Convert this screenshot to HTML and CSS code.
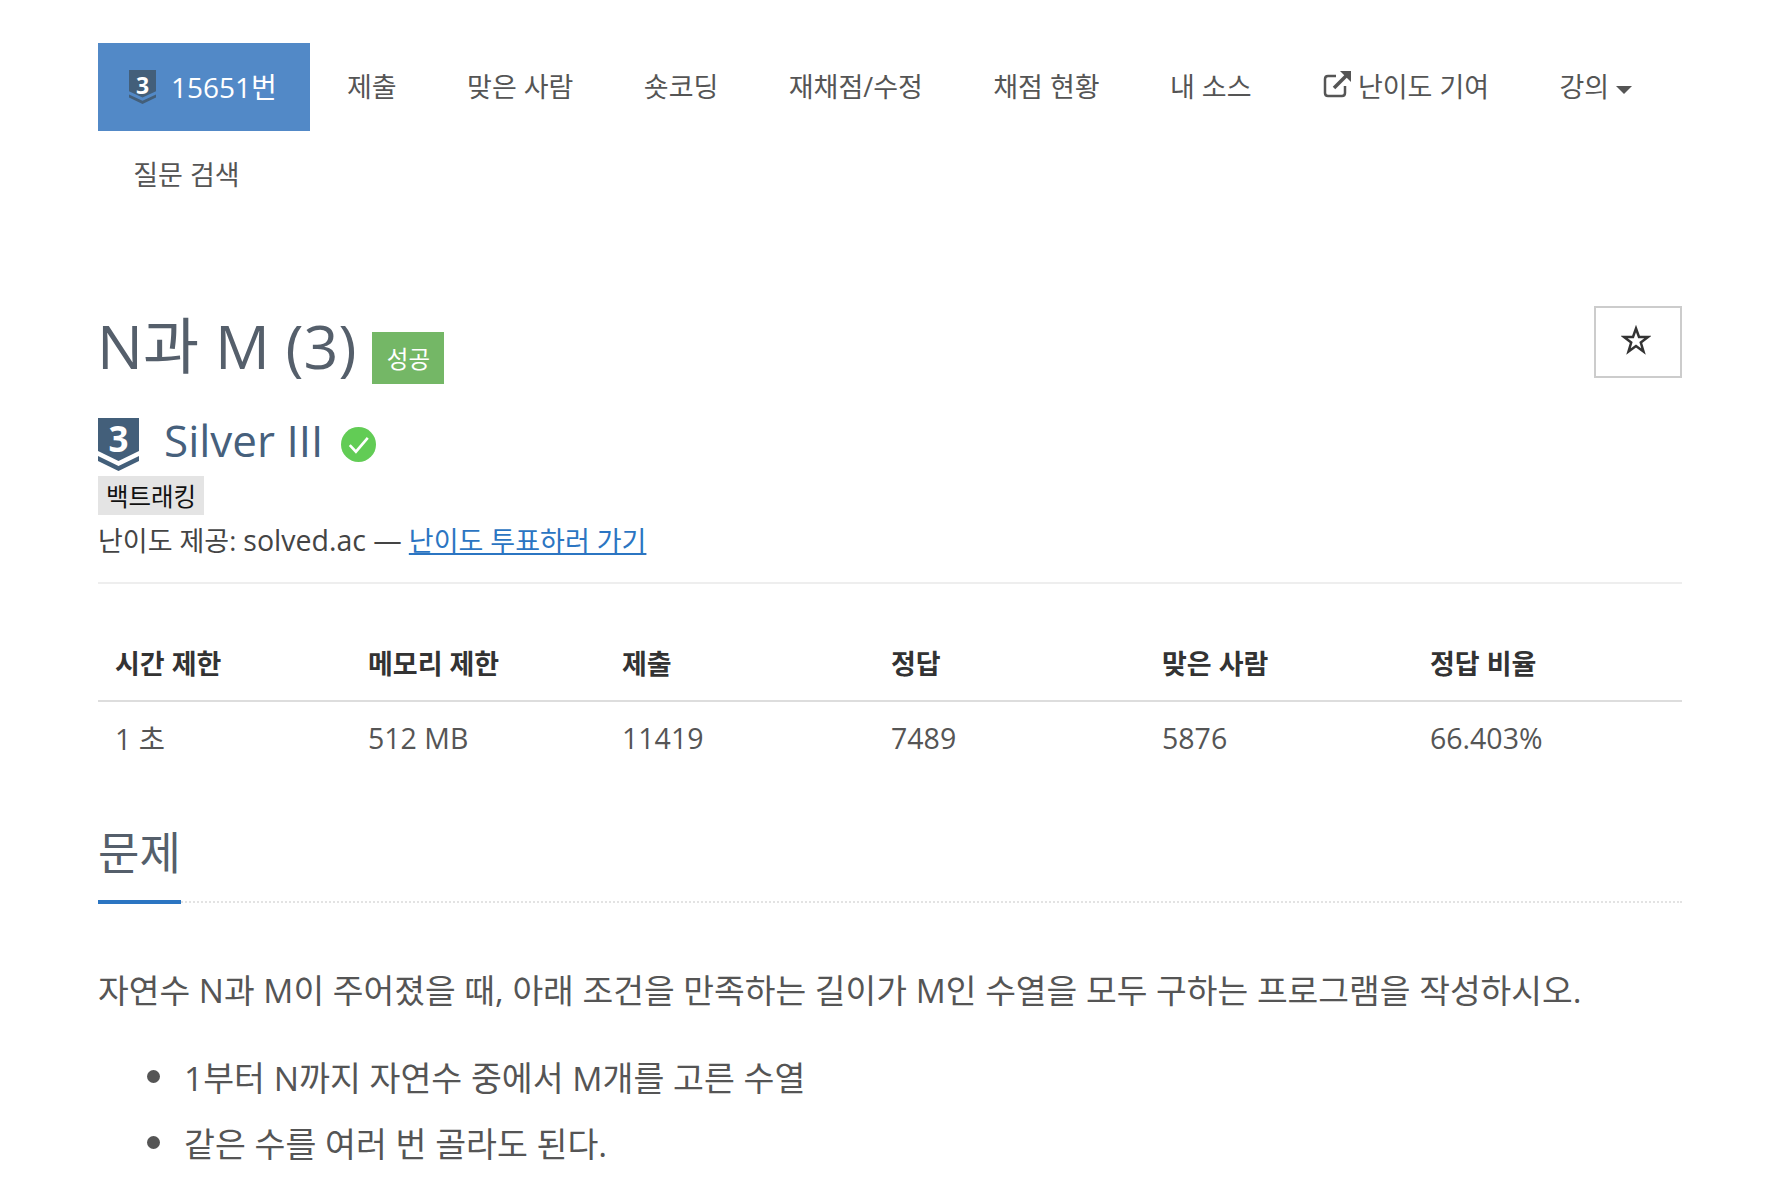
FILE: index.html
```html
<!DOCTYPE html>
<html lang="ko">
<head>
    <meta charset="UTF-8">
    <meta name="viewport" content="width=device-width, initial-scale=1.0">
    <title>N과 M (3)</title>
    <link rel="stylesheet" href="styles.css">
</head>
<body>
    <div class="container">
        <!-- Problem menu -->
        <ul class="problem-menu">
            <li class="active">
                <a href="#">
                    <span class="tier tier-small">
                        <svg viewBox="0 0 41 53" preserveAspectRatio="none">
                            <path d="M0 0H41V33L20.500 43L0 33Z" fill="#435f7a"/>
                            <path d="M0 38L20.500 48L41 38V43L20.500 53L0 43Z" fill="#435f7a"/>
                        </svg>
                        <span class="tier-digit">3</span>
                    </span>
                    15651번
                </a>
            </li>
            <li><a href="#">제출</a></li>
            <li><a href="#">맞은 사람</a></li>
            <li><a href="#">숏코딩</a></li>
            <li><a href="#">재채점/수정</a></li>
            <li><a href="#">채점 현황</a></li>
            <li><a href="#">내 소스</a></li>
            <li>
                <a href="#">
                    <svg class="ext-icon" viewBox="0 0 30 30">
                        <path d="M14 6H6Q3 6 3 9V23Q3 26 6 26H20Q23 26 23 23V16" fill="none" stroke="#555" stroke-width="2.500"/>
                        <path d="M12 18L24 6" fill="none" stroke="#555" stroke-width="3.500"/>
                        <path d="M18 1H29V12Z" fill="#555"/>
                    </svg>
                    난이도 기여
                </a>
            </li>
            <li><a href="#">강의<span class="caret"></span></a></li>
            <li><a href="#">질문 검색</a></li>
        </ul>

        <!-- Title -->
        <div class="title-row">
            <h1>N과 M (3)</h1>
            <span class="label-success">성공</span>
            <button class="star-btn">
                <svg viewBox="0 0 30 30" width="30" height="30">
                    <path d="M15 3.500L18 12H27L19.800 17.500L22.500 26.500L15 21L7.500 26.500L10.200 17.500L3 12H12Z" fill="none" stroke="#333" stroke-width="2.500"/>
                </svg>
            </button>
        </div>

        <div class="tier-row">
            <span class="tier tier-big">
                <svg viewBox="0 0 41 53" preserveAspectRatio="none">
                    <path d="M0 0H41V33L20.500 43L0 33Z" fill="#435f7a"/>
                    <path d="M0 38L20.500 48L41 38V43L20.500 53L0 43Z" fill="#435f7a"/>
                </svg>
                <span class="tier-digit">3</span>
            </span>
            <span class="tier-name">Silver III</span>
            <svg class="check-icon" viewBox="0 0 34 34">
                <circle cx="17" cy="17" r="17" fill="#62cc55"/>
                <path d="M8.500 17.500L14.500 24L26 10.500" fill="none" stroke="#fff" stroke-width="2.500"/>
            </svg>
        </div>
        <div class="tag-row"><span class="tag">백트래킹</span></div>
        <p class="credit">난이도 제공: <span class="latin">solved.ac —</span> <a href="#">난이도 투표하러 가기</a></p>

        <hr>

        <!-- Limits -->
        <table class="info-table">
            <thead>
                <tr>
                    <th>시간 제한</th>
                    <th>메모리 제한</th>
                    <th>제출</th>
                    <th>정답</th>
                    <th>맞은 사람</th>
                    <th>정답 비율</th>
                </tr>
            </thead>
            <tbody>
                <tr>
                    <td>1 초</td>
                    <td>512 MB</td>
                    <td>11419</td>
                    <td>7489</td>
                    <td>5876</td>
                    <td>66.403%</td>
                </tr>
            </tbody>
        </table>

        <!-- Description -->
        <div class="headline">
            <h2>문제</h2>
        </div>
        <p class="description">자연수 N과 M이 주어졌을 때, 아래 조건을 만족하는 길이가 M인 수열을 모두 구하는 프로그램을 작성하시오.</p>
        <ul class="conditions">
            <li>1부터 N까지 자연수 중에서 M개를 고른 수열</li>
            <li>같은 수를 여러 번 골라도 된다.</li>
        </ul>
    </div>
</body>
</html>
```

FILE: styles.css
```css
html, body {
    height: 100%;
    overflow: hidden;
}

body {
    margin: 0;
    background-color: #fff;
    color: #555;
    font-family: "Open Sans", "Noto Sans CJK KR", sans-serif;
    font-size: 27px;
}

a {
    color: inherit;
    text-decoration: none;
}

.container {
    padding: 43px 106px 0 98px;
}

.problem-menu {
    display: flex;
    flex-wrap: wrap;
    list-style: none;
    margin: 0;
    padding: 0;
}

.problem-menu a {
    display: flex;
    align-items: center;
    height: 88px;
    padding: 0 35.200px 4px;
    box-sizing: border-box;
}

.problem-menu .active {
    margin-right: 2px;
}

.problem-menu .active a {
    padding: 0 33px 3px 31px;
    background-color: #5289c7;
    color: #fff;
    font-size: 28px;
}

.tier {
    position: relative;
    display: block;
    flex-shrink: 0;
}

.tier svg {
    display: block;
    width: 100%;
    height: 100%;
}

/* digit sits on top of the shield */
.tier-digit {
    position: absolute;
    left: 0;
    right: 0;
    color: #fff;
    font-weight: 700;
    line-height: 1;
    text-align: center;
}

.tier-small {
    width: 27px;
    height: 34px;
    margin-top: 3px;
    margin-right: 15px;
}

.tier-small .tier-digit {
    top: 11%;
    font-size: 23px;
}

.tier-big {
    width: 41px;
    height: 53px;
}

.tier-big .tier-digit {
    top: 7%;
    font-size: 35px;
}

.ext-icon {
    width: 30px;
    height: 30px;
    margin-right: 6px;
}

.caret {
    display: inline-block;
    margin-left: 7px;
    margin-top: 10px;
    border-top: 8px solid #555;
    border-left: 8px solid transparent;
    border-right: 8px solid transparent;
}

.title-row {
    display: flex;
    align-items: center;
    height: 72px;
    margin-top: 87px;
}

h1 {
    margin: 0 0 0 -1px;
    color: #555f6b;
    font-size: 61px;
    font-weight: 400;
}

.label-success {
    display: flex;
    align-items: center;
    justify-content: center;
    width: 72px;
    height: 52px;
    margin-left: 16px;
    margin-top: 32px;
    background-color: #74b766;
    color: #fff;
    font-size: 23.500px;
}

.star-btn {
    display: flex;
    align-items: center;
    justify-content: center;
    width: 88px;
    height: 72px;
    margin-left: auto;
    padding: 0 4px 4px 0;
    background-color: #fff;
    border: 2px solid #ccc;
}

.tier-row {
    display: flex;
    align-items: center;
    height: 60px;
    margin-top: 36px;
}

.tier-name {
    margin-left: 25px;
    padding-bottom: 8px;
    color: #46607c;
    font-size: 44px;
    line-height: 52px;
}

.check-icon {
    width: 35px;
    height: 35px;
    margin-left: 18px;
}

.tag-row {
    display: flex;
    margin-top: 2px;
}

.tag {
    padding: 2px 8px;
    background-color: #e4e4e4;
    color: #111;
    font-size: 24.500px;
}

.credit {
    margin: 5px 0 0;
    color: #444;
}

.credit .latin {
    font-size: 28.500px;
}

.credit a {
    color: #2b75c2;
    text-decoration: underline;
}

hr {
    margin: 23px 0 0;
    border: 0;
    border-top: 2px solid #eee;
}

.info-table {
    width: 100%;
    margin-top: 43px;
    border-collapse: collapse;
    table-layout: fixed;
}

.info-table th,
.info-table td {
    box-sizing: border-box;
    padding: 0 17px;
    text-align: left;
}

.info-table th {
    height: 74px;
    padding-bottom: 2px;
    color: #333;
    font-size: 27px;
    font-weight: 700;
    border-bottom: 2px solid #ddd;
}

.info-table td {
    height: 72px;
    font-size: 28.500px;
}

.info-table th:nth-child(1) { width: 253px; }
.info-table th:nth-child(2) { width: 254px; }
.info-table th:nth-child(3) { width: 269px; }
.info-table th:nth-child(4) { width: 271px; }
.info-table th:nth-child(5) { width: 268px; }

.headline {
    margin-top: 45px;
    border-bottom: 2px dotted #e3e3e3;
}

h2 {
    display: inline-block;
    margin: 0 0 -3px;
    padding-bottom: 17px;
    color: #555f6b;
    font-size: 45px;
    font-weight: 400;
    border-bottom: 4px solid #2b75c2;
}

.description {
    margin: 61px 0 0;
    font-size: 33.400px;
}

.conditions {
    margin: 30px 0 0;
    padding: 0;
    list-style: none;
    font-size: 33.600px;
}

.conditions li {
    display: flex;
    align-items: center;
    height: 66px;
}

.conditions li::before {
    content: "";
    width: 13px;
    height: 13px;
    margin: 0 24px 0 49px;
    background-color: #555;
    border-radius: 50%;
}
```
